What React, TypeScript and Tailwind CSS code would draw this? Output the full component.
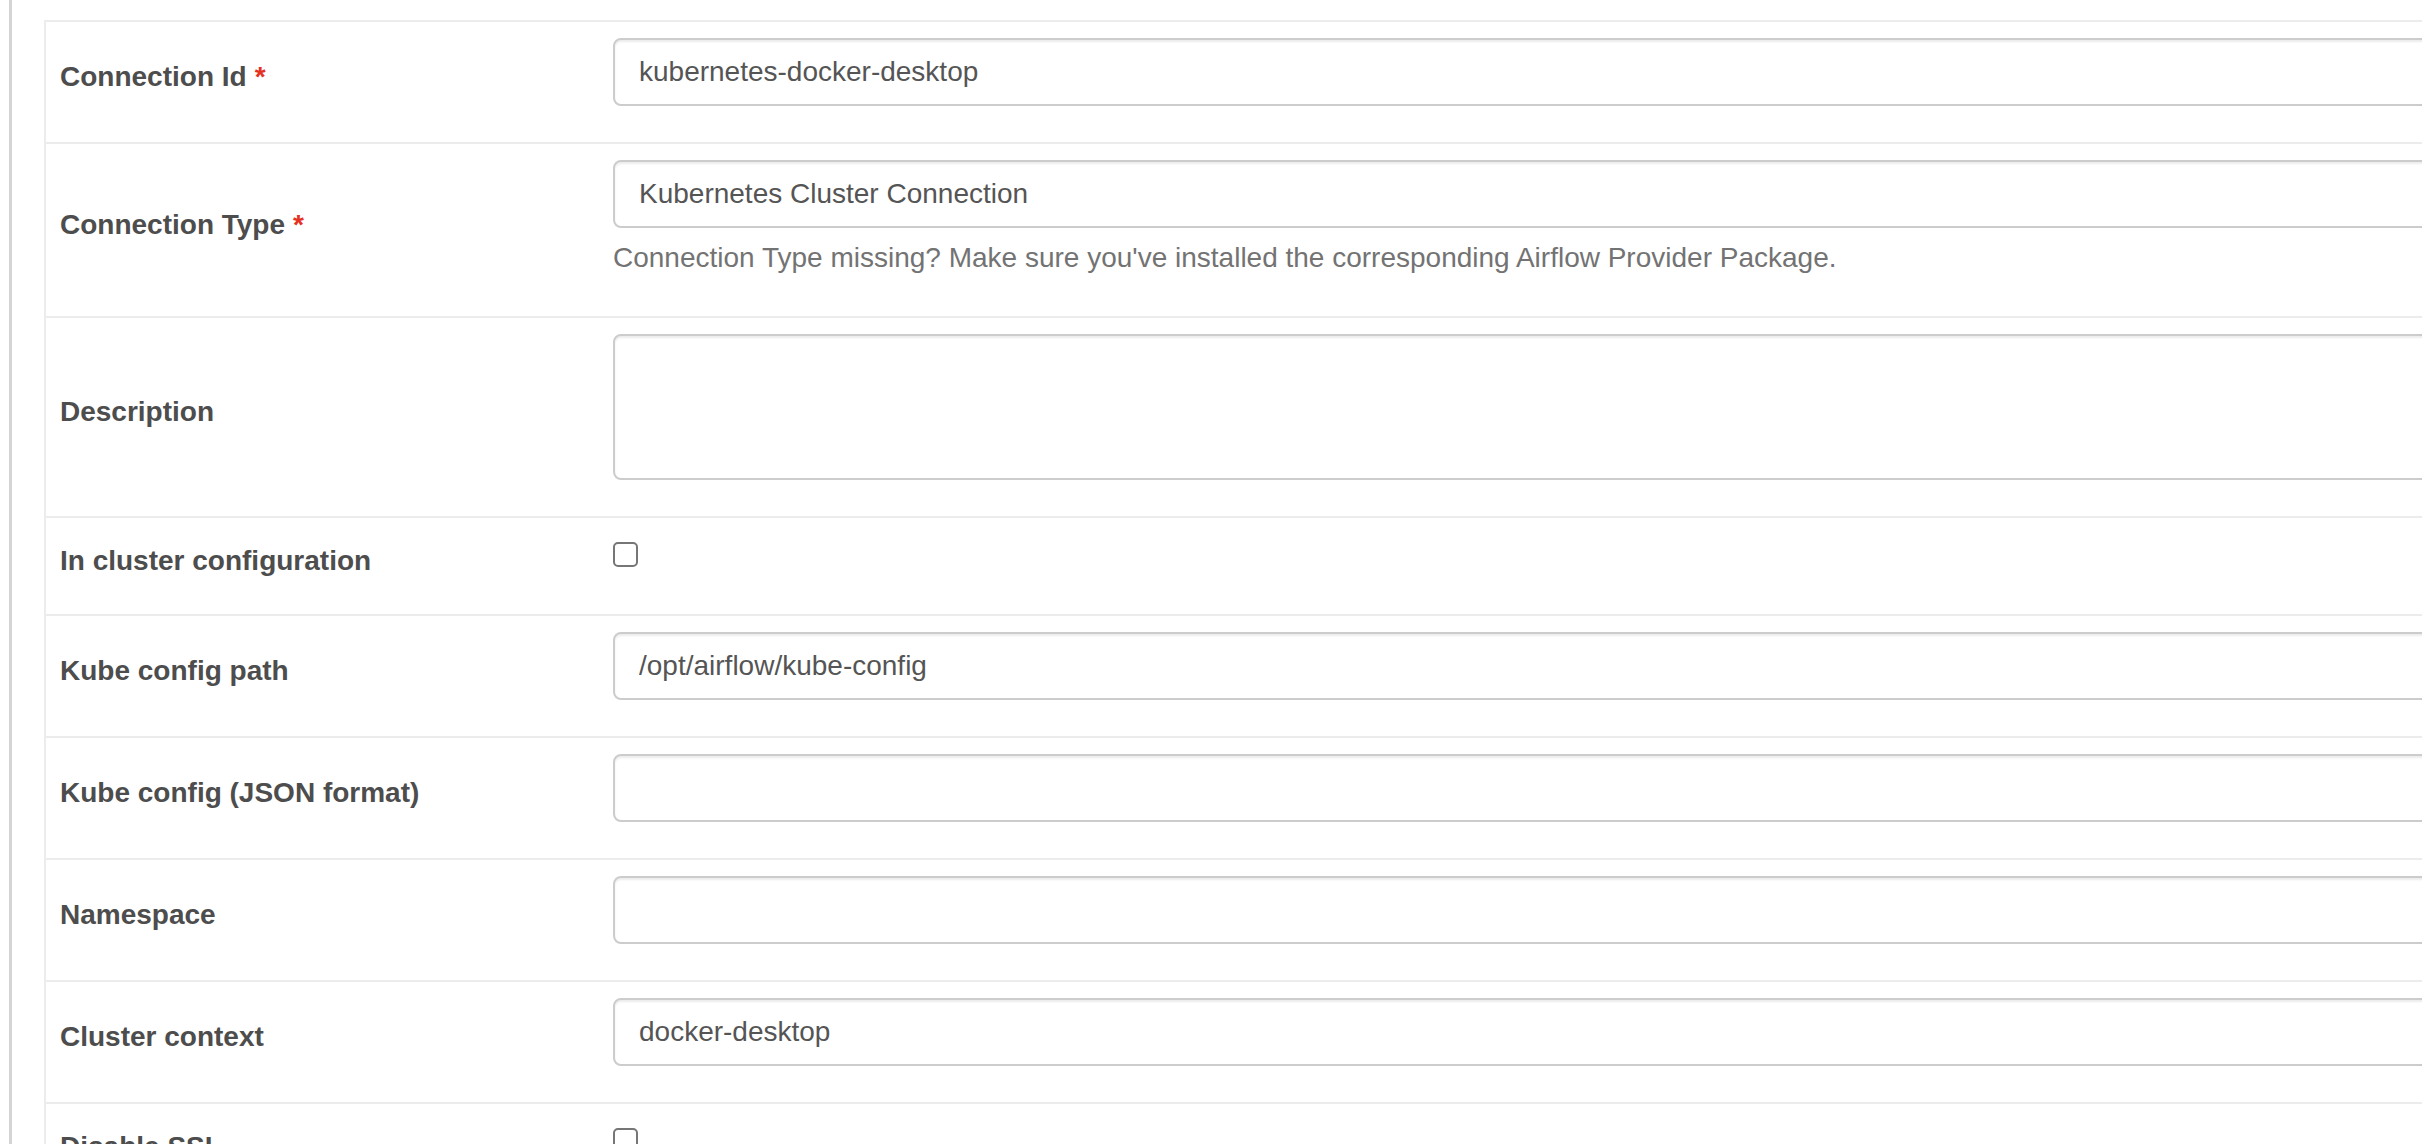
import React from "react";

type Field = {
  label: string;
  required?: boolean;
  kind: "text" | "textarea" | "checkbox";
  value?: string;
  help?: string;
};

const fields: Field[] = [
  { label: "Connection Id", required: true, kind: "text", value: "kubernetes-docker-desktop" },
  {
    label: "Connection Type",
    required: true,
    kind: "text",
    value: "Kubernetes Cluster Connection",
    help: "Connection Type missing? Make sure you've installed the corresponding Airflow Provider Package.",
  },
  { label: "Description", kind: "textarea" },
  { label: "In cluster configuration", kind: "checkbox" },
  { label: "Kube config path", kind: "text", value: "/opt/airflow/kube-config" },
  { label: "Kube config (JSON format)", kind: "text" },
  { label: "Namespace", kind: "text" },
  { label: "Cluster context", kind: "text", value: "docker-desktop" },
  { label: "Disable SSL", kind: "checkbox" },
];

const controlClass =
  "block w-full rounded-[8px] border-2 border-[#cccccc] bg-white px-[24px] text-[28px] leading-[40px] text-[#555555] shadow-[inset_0_2px_2px_rgba(0,0,0,0.075)] outline-none";

function FieldControl({ field }: { field: Field }) {
  if (field.kind === "checkbox") {
    return (
      <div className="pb-[47px] pt-[8px]">
        <input
          type="checkbox"
          readOnly
          className="block size-[25px] appearance-none rounded-[5px] border-2 border-[#767676] bg-white"
        />
      </div>
    );
  }
  if (field.kind === "textarea") {
    return (
      <div className="pb-[36px]">
        <textarea readOnly className={`${controlClass} h-[146px] resize-none py-[12px]`} />
      </div>
    );
  }
  return (
    <div className="pb-[36px]">
      <input readOnly defaultValue={field.value ?? ""} className={`${controlClass} h-[68px]`} />
      {field.help && (
        <p className="mb-[2px] mt-[10px] text-[28px] leading-[40px] text-[#737373]">{field.help}</p>
      )}
    </div>
  );
}

function FormRow({ field }: { field: Field }) {
  return (
    <div className="grid grid-cols-[551px_1fr] items-center border-b-2 border-[#ececec]">
      <label className="pb-[10px] pl-[14px] text-[28px] font-bold leading-[40px] text-[#4d4d4d]">
        {field.label}
        {field.required && <span className="ml-[8px] text-[#e4321f]">*</span>}
      </label>
      <div className="self-start pl-[16px] pt-[16px]">
        <FieldControl field={field} />
      </div>
    </div>
  );
}

export default function App() {
  return (
    <div className="h-[1144px] w-full overflow-hidden bg-white pl-[9px] font-['Liberation_Sans',Arial,Helvetica,sans-serif]">
      <div className="h-full border-l-[3px] border-[#d4d4d4] pl-[32px] pt-[20px]">
        <div className="w-[2700px] border-l-2 border-t-2 border-[#ececec]">
          {fields.map((f) => (
            <FormRow key={f.label} field={f} />
          ))}
        </div>
      </div>
    </div>
  );
}
